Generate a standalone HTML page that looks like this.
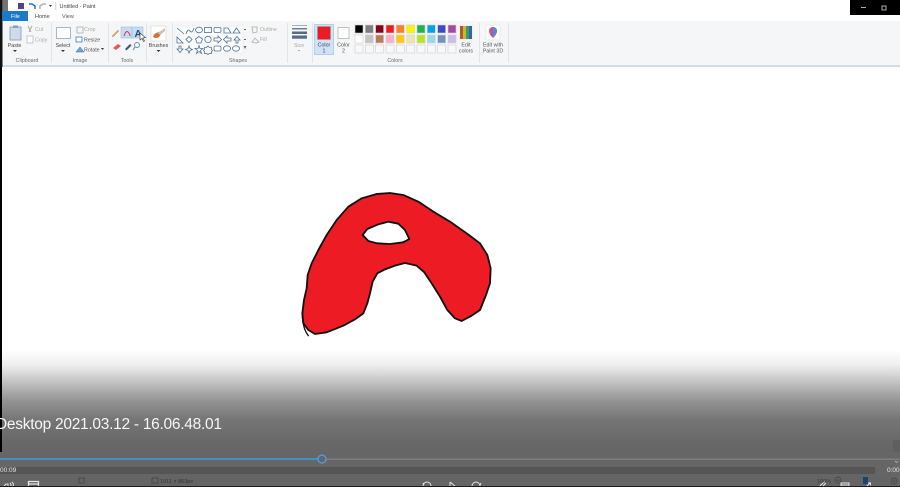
<!DOCTYPE html>
<html><head><meta charset="utf-8"><style>
html,body{margin:0;padding:0;background:#fff;width:900px;height:487px;overflow:hidden}
svg{display:block}
text{font-family:"Liberation Sans",sans-serif}
</style></head><body>
<svg width="900" height="487" viewBox="0 0 900 487" xmlns="http://www.w3.org/2000/svg">
<defs><linearGradient id="g" x1="0" y1="0" x2="0" y2="1">
<stop offset="0" stop-color="#fff"/><stop offset=".11" stop-color="#eeeeee"/><stop offset=".255" stop-color="#bbbbbb"/><stop offset=".365" stop-color="#959595"/><stop offset=".51" stop-color="#757575"/><stop offset=".69" stop-color="#676767"/><stop offset="1" stop-color="#646464"/></linearGradient></defs>
<rect width="900" height="487" fill="#fff"/>
<g style="filter:blur(.35px)">
<!-- ribbon -->
<rect y="21" width="900" height="44" fill="#f5f6f7"/>
<rect y="65" width="900" height="2" fill="#d3dfe8"/>
<rect x="850" y="0" width="50" height="15" fill="#000"/>
<rect x="861" y="7" width="5" height="1" fill="#aaa"/>
<rect x="882" y="6" width="4" height="4" fill="none" stroke="#aaa"/>
<rect x="0" y="0" width="2.500" height="67" fill="#111"/>
<rect x="2" y="0" width="6" height="15" fill="#444" opacity=".75"/>
<!-- qat -->
<rect x="18" y="3" width="6" height="6" fill="#57408f"/>
<path d="M29 4h3l3 2v3" fill="none" stroke="#1c7cc9" stroke-width="1.500"/>
<path d="M46 4h-3l-3 2v3" fill="none" stroke="#a8b0c8" stroke-width="1.500"/>
<path d="M49 5h3l-1.500 2z" fill="#333"/>
<rect x="55.500" y="2" width=".7" height="8" fill="#bbb"/>
<text x="59.500" y="8" font-size="5.500" fill="#444">Untitled - Paint</text>
<!-- tabs -->
<rect x="2" y="11" width="26" height="10" fill="#1979ca"/>
<text x="11" y="18" font-size="5.500" fill="#fff">File</text>
<text x="35" y="18" font-size="5.500" fill="#444">Home</text>
<text x="62" y="18" font-size="5.500" fill="#555">View</text>
<!-- group separators -->
<g fill="#e2e4e7"><rect x="51" y="23" width="1" height="40"/><rect x="108" y="23" width="1" height="40"/><rect x="146" y="23" width="1" height="40"/><rect x="172" y="23" width="1" height="40"/><rect x="287" y="23" width="1" height="40"/><rect x="312" y="23" width="1" height="40"/><rect x="479" y="23" width="1" height="40"/><rect x="508" y="23" width="1" height="40"/></g>
<g font-size="5.300" fill="#6a6a6a" text-anchor="middle">
<text x="27" y="62">Clipboard</text><text x="80" y="62">Image</text><text x="127" y="62">Tools</text><text x="238" y="62">Shapes</text><text x="395" y="62">Colors</text></g>
<!-- clipboard -->
<rect x="10" y="27" width="11" height="13" fill="#cfdbe8" stroke="#7d9ab8" stroke-width=".8"/>
<rect x="13" y="25.500" width="5" height="2.500" fill="#8aa0b8"/>
<text x="14.500" y="47" font-size="5.300" fill="#444" text-anchor="middle">Paste</text>
<path d="M13 50h4l-2 2z" fill="#333"/>
<path d="M28 26l3 6M32 26l-3 6" stroke="#aaa" fill="none"/>
<text x="35" y="31" font-size="5.300" fill="#aaa">Cut</text>
<rect x="27" y="36" width="6" height="7" fill="#fff" stroke="#bbb" stroke-width=".8"/>
<text x="35" y="41.500" font-size="5.300" fill="#aaa">Copy</text>
<!-- image -->
<rect x="56.500" y="27.500" width="14" height="11" fill="#fff" stroke="#8ea7bf" stroke-width=".8"/>
<text x="63" y="47" font-size="5.300" fill="#444" text-anchor="middle">Select</text>
<path d="M61 50h4l-2 2z" fill="#333"/>
<rect x="77" y="27" width="6" height="6" fill="none" stroke="#aaa" stroke-width=".8"/>
<text x="84" y="31" font-size="5.300" fill="#aaa">Crop</text>
<rect x="76" y="37" width="6" height="5" fill="#fff" stroke="#3b7fbf" stroke-width=".8"/>
<text x="84" y="41.500" font-size="5.300" fill="#555">Resize</text>
<path d="M76 52l4-5 4 5z" fill="#6fa8d8" stroke="#2c6aa5" stroke-width=".5"/>
<text x="84" y="51.500" font-size="5.300" fill="#555">Rotate</text>
<path d="M101 48h3l-1.500 2z" fill="#333"/>
<!-- tools -->
<rect x="121" y="27" width="11" height="11" fill="#c6dcf2" stroke="#9cbfe0" stroke-width=".6"/>
<rect x="132" y="27" width="11" height="11" fill="#c6dcf2" stroke="#9cbfe0" stroke-width=".6"/>
<path d="M112 36l6-6 1 1-6 6z" fill="#e0a93f" stroke="#888" stroke-width=".3"/>
<path d="M124 36q2-6 4-4t2 4" fill="none" stroke="#d04040"/>
<text x="134.500" y="37" font-size="10" font-weight="bold" fill="#2a4a6e">A</text>
<path d="M113 48l5-4 3 2-5 4z" fill="#e8545f"/>
<path d="M125 49l5-5 1.500 1.500-5 5z" fill="#3a5a7a"/>
<circle cx="137" cy="45" r="2.500" fill="none" stroke="#6a88a8" stroke-width=".9"/><path d="M135 47l-2 3" stroke="#6a88a8"/>
<path d="M140 33l0 7 2-1.500 1.500 3 1-.5-1.500-3 2.500-.3z" fill="#fff" stroke="#333" stroke-width=".6"/>
<!-- brushes -->
<rect x="151" y="26" width="15" height="15" fill="#fff" stroke="#cfd4d9" stroke-width=".6"/>
<path d="M153 37q5 3 8-3l4-5-6 3q-5 1-6 5z" fill="#e06a35"/>
<path d="M158 33l7-5v3l-5 4z" fill="#c9c2b8"/>
<text x="158.500" y="47" font-size="5.300" fill="#444" text-anchor="middle">Brushes</text>
<path d="M156.500 50h4l-2 2z" fill="#333"/>
<!-- shapes -->
<rect x="175" y="26" width="68" height="27" fill="#fafbfc" stroke="#e6e8eb" stroke-width=".6"/>
<g fill="none" stroke="#4f7398" stroke-width=".8">
<path d="M177 28l7 6"/><path d="M186 34q2-6 4-3t4-3"/><ellipse cx="199" cy="30" rx="3.500" ry="2.800"/><rect x="204.500" y="27.500" width="7" height="5"/><rect x="214" y="27.500" width="7" height="5" rx="1.500"/><path d="M224 33v-5h4l3 5z"/><path d="M233 33l3.500-5 3.500 5z"/>
<path d="M177 37v6h6z"/><path d="M189 36.500l3 3-3 3-3-3z"/><path d="M199 36.500l3.500 2.500-1.500 4h-4l-1.500-4z"/><circle cx="208" cy="39.500" r="3.200"/><path d="M214 38h4v-2l3.500 3.500-3.500 3.500v-2h-4z"/><path d="M231 38h-4v-2l-3.500 3.500 3.500 3.500v-2h4z"/><path d="M236 43v-3h-2l3-3.500 3 3.500h-2v3z"/>
<path d="M179 46v3h-2l3 3.500 3-3.500h-2v-3z"/><path d="M189 46l1 2.500 2.500 1-2.500 1-1 2.500-1-2.500-2.500-1 2.500-1z"/><path d="M199 45.500l1 3h3l-2.500 2 1 3-2.500-2-2.500 2 1-3-2.500-2h3z"/><path d="M208 46l1.500 1.500h2v2l1 1-1 1v2h-2l-1.500 1-1.500-1h-2v-2l-1-1 1-1v-2h2z"/><rect x="214" y="46" width="7" height="5" rx="1.500"/><ellipse cx="227" cy="48.500" rx="3.500" ry="2.700"/><ellipse cx="236" cy="48.500" rx="3.500" ry="2.700"/></g>
<g fill="#666"><rect x="244" y="29" width="2" height="1"/><rect x="244" y="39" width="2" height="1"/><path d="M243.500 46h3l-1.500 3z"/></g>
<path d="M252 27h5v5l-4 1z" fill="none" stroke="#b5b5b5" stroke-width=".9"/>
<text x="260" y="31" font-size="5.300" fill="#aaa">Outline</text>
<path d="M252 42l3-4 4 4-3 1z" fill="none" stroke="#b5b5b5" stroke-width=".9"/>
<text x="260" y="41" font-size="5.300" fill="#aaa">Fill</text>
<!-- size -->
<rect x="292" y="25" width="15" height=".8" fill="#8fa0b5"/><rect x="292" y="28" width="15" height="1.500" fill="#6b7f99"/><rect x="292" y="31.500" width="15" height="2.500" fill="#566b88"/><rect x="292" y="35.500" width="15" height="3.200" fill="#566b88"/>
<text x="299" y="47" font-size="5.300" fill="#aaa" text-anchor="middle">Size</text>
<path d="M297.500 50h3l-1.500 1.500z" fill="#aaa"/>
<!-- color 1/2 -->
<rect x="314.500" y="24.500" width="19" height="30" fill="#cfe2f6" stroke="#a7c8e8" stroke-width=".8"/>
<rect x="317.500" y="26.500" width="13" height="13" fill="#ed1c24" stroke="#999" stroke-width=".6"/>
<text x="324" y="46.500" font-size="5.300" fill="#445" text-anchor="middle">Color</text><text x="324" y="52.500" font-size="5.300" fill="#445" text-anchor="middle">1</text>
<rect x="338" y="27.500" width="11" height="11" fill="#fff" stroke="#aaa" stroke-width=".7"/>
<text x="343.500" y="46.500" font-size="5.300" fill="#555" text-anchor="middle">Color</text><text x="343.500" y="52.500" font-size="5.300" fill="#555" text-anchor="middle">2</text>
<!-- palette -->
<g stroke="#d0d0d0" stroke-width=".6">
<rect x="355" y="25" width="8" height="8" fill="#000"/><rect x="365.300" y="25" width="8" height="8" fill="#7f7f7f"/><rect x="375.600" y="25" width="8" height="8" fill="#880015"/><rect x="386" y="25" width="8" height="8" fill="#ed1c24"/><rect x="396.300" y="25" width="8" height="8" fill="#ff7f27"/><rect x="406.600" y="25" width="8" height="8" fill="#fff200"/><rect x="417" y="25" width="8" height="8" fill="#22b14c"/><rect x="427.300" y="25" width="8" height="8" fill="#00a2e8"/><rect x="437.600" y="25" width="8" height="8" fill="#3f48cc"/><rect x="448" y="25" width="8" height="8" fill="#a349a4"/>
<rect x="355" y="35" width="8" height="8" fill="#fff"/><rect x="365.300" y="35" width="8" height="8" fill="#c3c3c3"/><rect x="375.600" y="35" width="8" height="8" fill="#b97a57"/><rect x="386" y="35" width="8" height="8" fill="#ffaec9"/><rect x="396.300" y="35" width="8" height="8" fill="#ffc90e"/><rect x="406.600" y="35" width="8" height="8" fill="#efe4b0"/><rect x="417" y="35" width="8" height="8" fill="#b5e61d"/><rect x="427.300" y="35" width="8" height="8" fill="#99d9ea"/><rect x="437.600" y="35" width="8" height="8" fill="#7092be"/><rect x="448" y="35" width="8" height="8" fill="#c8bfe7"/>
<g fill="#f8f8f8"><rect x="355" y="45" width="8" height="8"/><rect x="365.300" y="45" width="8" height="8"/><rect x="375.600" y="45" width="8" height="8"/><rect x="386" y="45" width="8" height="8"/><rect x="396.300" y="45" width="8" height="8"/><rect x="406.600" y="45" width="8" height="8"/><rect x="417" y="45" width="8" height="8"/><rect x="427.300" y="45" width="8" height="8"/><rect x="437.600" y="45" width="8" height="8"/><rect x="448" y="45" width="8" height="8"/></g>
</g>
<!-- edit colors -->
<rect x="459.500" y="25.500" width="13" height="14" fill="#e8e8e8"/>
<rect x="460" y="26" width="3" height="13" fill="#b8562f"/><rect x="463" y="26" width="3" height="13" fill="#c8b830"/><rect x="466" y="26" width="3" height="13" fill="#35a060"/><rect x="469" y="26" width="3" height="13" fill="#3a5fb0"/>
<text x="466" y="46.500" font-size="5.300" fill="#555" text-anchor="middle">Edit</text><text x="466" y="52.500" font-size="5.300" fill="#555" text-anchor="middle">colors</text>
<!-- paint 3d -->
<rect x="486" y="25" width="14" height="15" fill="#fff" stroke="#ddd" stroke-width=".5"/>
<path d="M489 31a4 4 0 0 1 8 0q0 3-4 7q-4-4-4-7z" fill="#d84a8c"/><path d="M493 27a4 4 0 0 1 4 4q0 3-4 7z" fill="#4a90d8"/>
<text x="493" y="46.500" font-size="5.300" fill="#555" text-anchor="middle">Edit with</text><text x="493" y="52.500" font-size="5.300" fill="#555" text-anchor="middle">Paint 3D</text>
</g>
<!-- left strip -->
<rect x="0" y="67" width="2" height="385" fill="#000"/>
<!-- drawing -->
<g transform="translate(290 185) scale(.33333)" stroke-linejoin="round" stroke-linecap="round">
<path d="M37 385L42 345L50 310L53 270L65 235L85 195L110 150L140 105L175 65L215 40L260 27L300 24L340 30L385 50L430 80L480 110L530 145L570 175L592 210L602 250L600 295L588 330L570 375L545 392L515 408L495 400L472 375L450 335L425 295L403 262L380 242L345 234L315 242L285 253L262 265L248 290L240 325L232 355L220 385L195 403L160 422L110 442L75 447L55 435L40 415Z" fill="#ed1c24" stroke="#111" stroke-width="5.500"/>
<path d="M218 150L232 132L265 118L295 110L325 116L345 135L358 162L340 172L300 177L262 175L235 168Z" fill="#fff" stroke="#111" stroke-width="5.500"/>
<path d="M37 395C40 425 45 440 55 452" fill="none" stroke="#111" stroke-width="4"/>
<path d="M340 170q10-2 16-8" fill="none" stroke="#111" stroke-width="4"/>
</g>
<!-- video overlay -->
<rect x="0" y="350" width="900" height="137" fill="url(#g)"/>
<rect x="0" y="350" width="2" height="102" fill="#000"/>
<text x="-4" y="429" font-size="15.500" fill="#f6f6f6" textLength="226" lengthAdjust="spacing">Desktop 2021.03.12 - 16.06.48.01</text>
<rect x="0" y="458" width="318" height="2" fill="#4a8cc4"/>
<rect x="326" y="458.500" width="574" height="1.500" fill="#7d7d7d"/>
<circle cx="322" cy="459" r="4" fill="#5a6a75" stroke="#5b9bd5" stroke-width="1.300"/>
<rect x="0" y="467" width="875" height="7" fill="#555"/>
<text x="0" y="472" font-size="6.500" fill="#e8e8e8">00:09</text>
<text x="887" y="472" font-size="6.500" fill="#e8e8e8">0:00</text>
<path d="M895 461l1.500 1.500 1.500-1.500" fill="none" stroke="#bbb" stroke-width=".7"/>
<rect x="893" y="440" width="7" height="12" fill="#5f5f5f"/>
<g fill="none" stroke="#444" stroke-width=".8"><rect x="79" y="478" width="5" height="5"/><rect x="152" y="478" width="6" height="5"/></g>
<text x="160" y="483" font-size="5.500" fill="#333">1911 × 863px</text>
<g fill="none" stroke="#e4e4e4" stroke-width="1">
<path d="M4 486l2-2h2v3M10 483q2 2 0 4M12 482q3 3 0 5"/>
<path d="M28.500 487v-5.500h10V487M28.500 484h10" stroke-width="1.300"/>
<path d="M423 486a4 4 0 0 1 8 0M423 483l1 2"/>
<path d="M450 482l6 5"/><path d="M450 482v5"/>
<path d="M472 486a4 4 0 0 1 8 0M481 483l-1 2"/>
<path d="M819 487l5-5 1.500 1.500-4 4"/>
<path d="M841 487v-4h8v4M841 485h8"/>
<path d="M866 487l4-4M868 483h2.500v2.500"/>
</g>
<text x="817" y="483" font-size="5.500" fill="#3a3a3a">100%</text>
<circle cx="838" cy="480" r="3" fill="none" stroke="#444" stroke-width=".7"/><rect x="836.500" y="479.700" width="3" height=".7" fill="#444"/>
<rect x="863" y="477" width="5" height="7" fill="#17456f"/>
<circle cx="894" cy="481" r="3" fill="none" stroke="#444" stroke-width=".7"/><path d="M892.500 481h3M894 479.500v3" stroke="#444" stroke-width=".6"/>
<rect x="0" y="486" width="900" height="1" fill="#1c1c1c"/>
</svg>
</body></html>
